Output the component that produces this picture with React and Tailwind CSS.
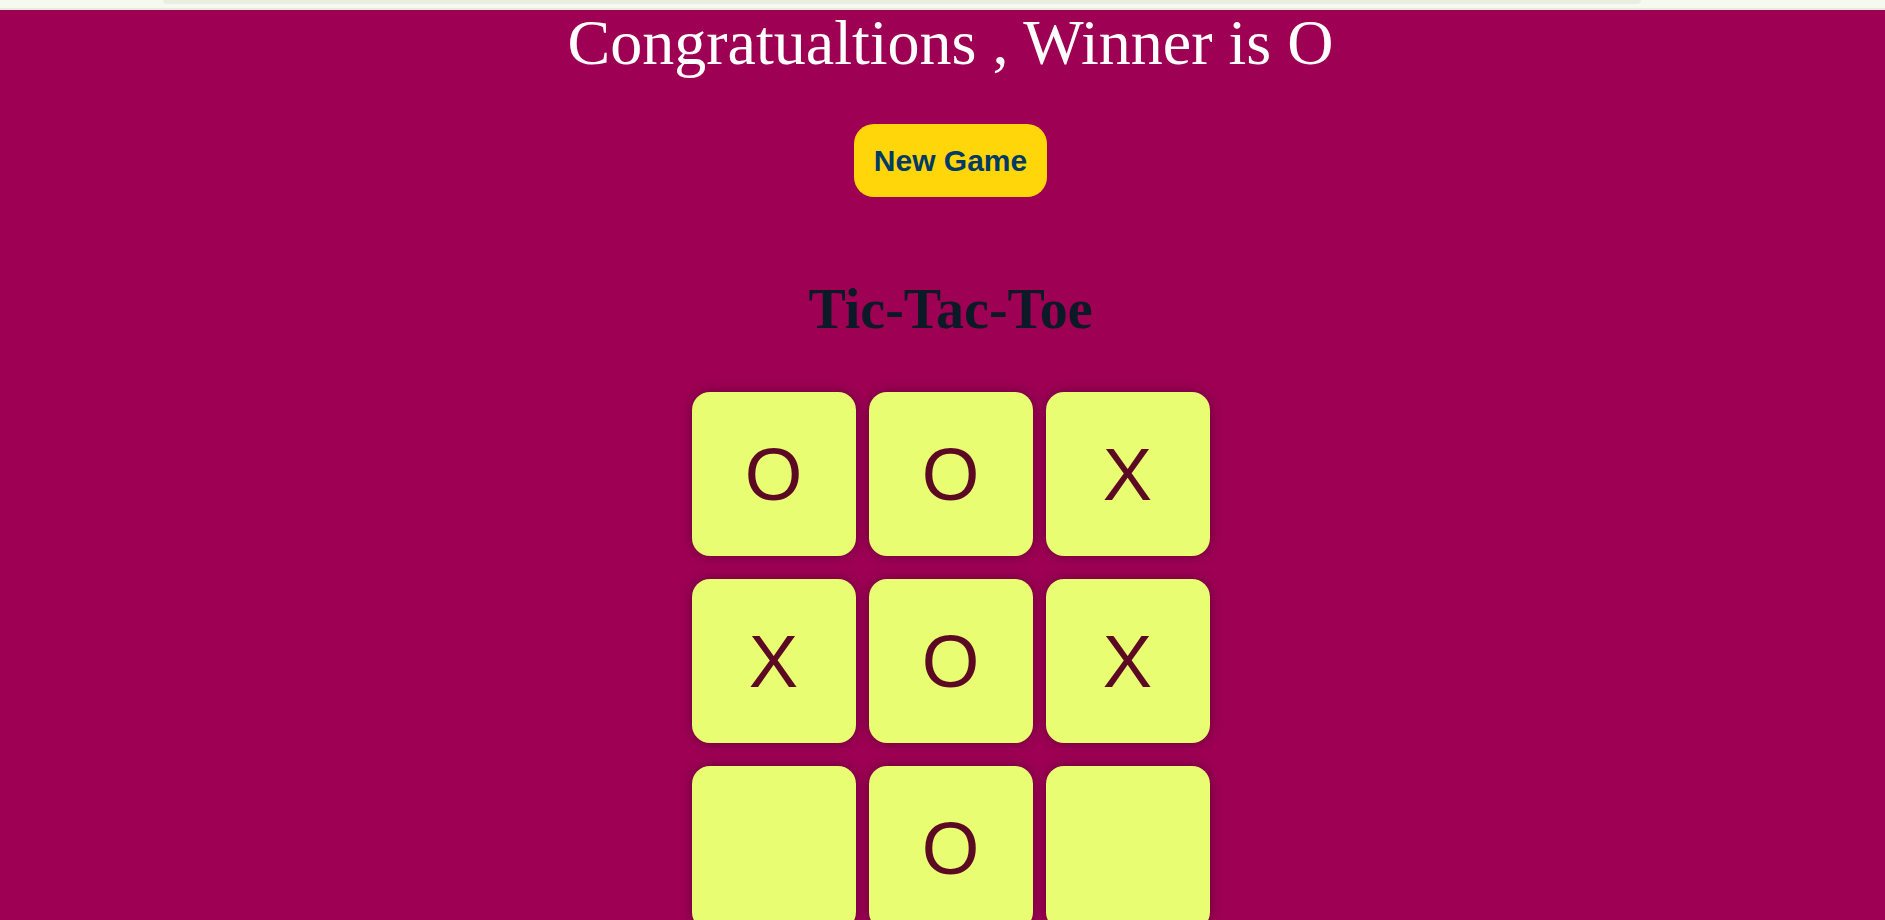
import { useState } from "react"

const START = ["O", "O", "X", "X", "O", "X", "", "O", ""]

export default function App() {
  const [board] = useState(START)

  return (
    <div className="min-h-screen bg-[#9e0054]" style={{ fontFamily: '"Liberation Serif", serif' }}>
      {/* thin light strip across the top */}
      <div className="h-[10px] bg-[#f6f9f0] border-b-2 border-[#e6ecdc] flex">
        <div className="ml-[163px] w-[1478px] h-[4px] rounded-b-[6px] bg-[#e9eee0]" />
      </div>

      <div className="flex flex-col items-center pl-[16px]">
        <h1 className="text-[64px] leading-[66px] text-white font-normal">
          Congratualtions , Winner is O
        </h1>

        <button
          className="mt-[48px] w-[193px] h-[73px] rounded-[20px] bg-[#ffd60a] text-[#003a66] text-[30px] font-bold"
          style={{ fontFamily: '"Liberation Sans", Arial, sans-serif' }}
        >
          New Game
        </button>

        <h2 className="mt-[82px] text-[56px] leading-[60px] font-bold text-[#0b1a26]">
          Tic-Tac-Toe
        </h2>

        <div className="mt-[53px] grid grid-cols-3 gap-x-[13px] gap-y-[23px]">
          {board.map((v, i) => (
            <div
              key={i}
              className="w-[164px] h-[164px] rounded-[18px] bg-[#e9fd72] shadow-[0_0_12px_rgba(0,0,0,0.35)] flex items-center justify-center text-[74px] text-[#5c0a24]"
              style={{ fontFamily: '"Liberation Sans", Arial, sans-serif' }}
            >
              {v}
            </div>
          ))}
        </div>
      </div>
    </div>
  )
}
